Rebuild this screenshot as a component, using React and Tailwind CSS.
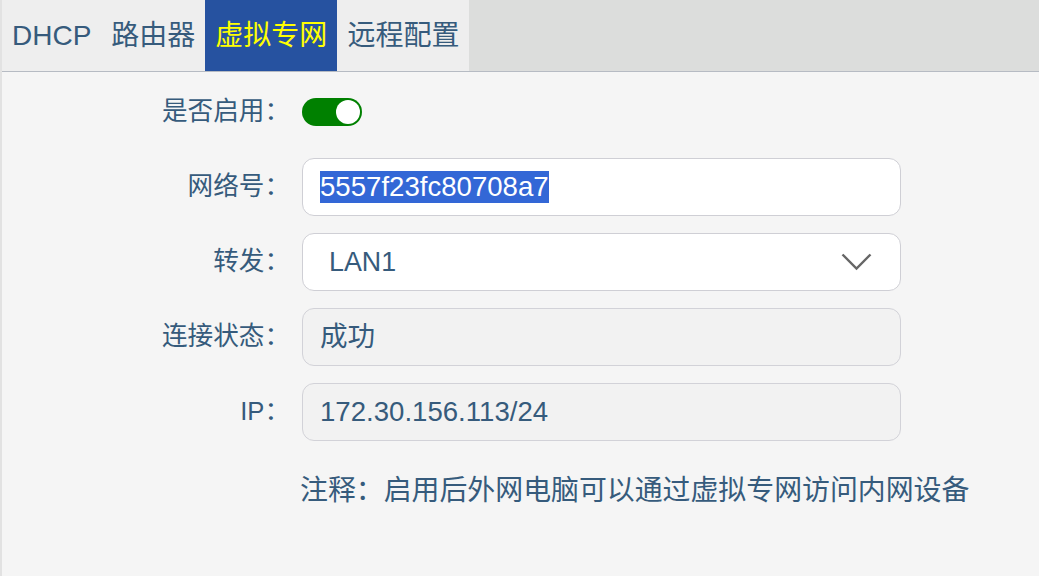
import { useState } from "react";

const font = "font-['Liberation_Sans','Noto_Sans_CJK_SC',sans-serif]";

const tabs = ["DHCP", "路由器", "虚拟专网", "远程配置"];

function Row({ label, children }) {
    return (
        <div className="flex items-center h-[58px]">
            <div className="w-[288px] shrink-0 text-right text-[25.6px] leading-none">{label}</div>
            <div className="ml-[12px] w-[599px] h-full flex items-center">{children}</div>
        </div>
    );
}

export default function App() {
    const [active] = useState(2);
    const [on] = useState(true);

    return (
        <div className={`${font} w-[1039px] h-[576px] bg-[#f5f5f5] text-[#365b7c] border-l-2 border-[#e2e2e2] overflow-hidden`}>
            {/* tab bar */}
            <div className="flex h-[72px] bg-[#dcdddc] border-b border-[#b6bbc3]">
                <div className="flex bg-[#eeeeee]">
                    {tabs.map((t, i) => (
                        <div
                            key={t}
                            className={
                                i === active
                                    ? "px-[10px] flex items-center text-[28px] leading-none bg-[#2652a0] text-[#ffff00]"
                                    : "px-[10px] flex items-center text-[28px] leading-none"
                            }
                        >
                            {t}
                        </div>
                    ))}
                </div>
            </div>

            <div className="pt-[11px] flex flex-col gap-[17px]">
                <Row label="是否启用：">
                    <div className={on ? "w-[60px] h-[28px] rounded-full bg-[#008000] flex items-center justify-end pr-[2px]" : "w-[60px] h-[28px] rounded-full bg-gray-300 flex items-center pl-[2px]"}>
                        <div className="w-[24px] h-[24px] rounded-full bg-white" />
                    </div>
                </Row>

                <Row label="网络号：">
                    <div className="w-full h-full rounded-[12px] border border-[#cfcfd5] bg-white flex items-center pl-[17px]">
                        <span className="text-[27.6px] leading-[32px] bg-[#3367d6] text-white">5557f23fc80708a7</span>
                    </div>
                </Row>

                <Row label="转发：">
                    <div className="w-full h-full rounded-[12px] border border-[#cfcfd5] bg-white flex items-center justify-between pl-[26px] pr-[28px]">
                        <span className="text-[26.8px] leading-none">LAN1</span>
                        <svg width="31" height="18" viewBox="0 0 31 18" fill="none">
                            <path d="M1.5 1.5 L15.5 15.5 L29.5 1.5" stroke="#666" strokeWidth="2.4" />
                        </svg>
                    </div>
                </Row>

                <Row label="连接状态：">
                    <div className="w-full h-full rounded-[12px] border border-[#d2d2d8] bg-[#f2f2f2] flex items-center pl-[17px]">
                        <span className="text-[27.6px] leading-none">成功</span>
                    </div>
                </Row>

                <Row label="IP：">
                    <div className="w-full h-full rounded-[12px] border border-[#d2d2d8] bg-[#f2f2f2] flex items-center pl-[17px]">
                        <span className="text-[27.6px] leading-none">172.30.156.113/24</span>
                    </div>
                </Row>

                <div className="mt-[13px] pl-[298px] h-[40px] flex items-center text-[27.9px] leading-none">
                    注释：启用后外网电脑可以通过虚拟专网访问内网设备
                </div>
            </div>
        </div>
    );
}
